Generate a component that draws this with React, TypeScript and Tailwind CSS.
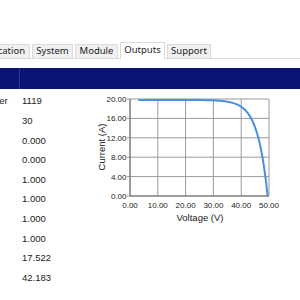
import React from 'react';

const rows = [
  { label: 'Module Number', value: '1119' },
  { label: '', value: '30' },
  { label: '', value: '0.000' },
  { label: '', value: '0.000' },
  { label: '', value: '1.000' },
  { label: '', value: '1.000' },
  { label: '', value: '1.000' },
  { label: '', value: '1.000' },
  { label: '', value: '17.522' },
  { label: '', value: '42.183' },
];

const tabs = [
  { name: 'Application', w: 'w-[60px]' },
  { name: 'System', w: 'w-[41px]' },
  { name: 'Module', w: 'w-[43px]' },
  { name: 'Outputs', w: 'w-[45px]', active: true },
  { name: 'Support', w: 'w-[44px]' },
];

// plot box inside the svg
const L = 40;
const R = 179;
const T = 10;
const B = 107;

function IVChart() {
  const sx = (v: number) => L + (v / 50) * (R - L);
  const sy = (i: number) => B - (i / 20) * (B - T);
  const isc = 19.8;
  const voc = 49.5;
  const a = 3.586;
  const pts: string[] = [];
  for (let v = 3; v <= voc; v += 0.25) {
    const i = Math.max(0, isc - isc * Math.exp((v - voc) / a));
    pts.push(`${sx(v).toFixed(2)},${sy(i).toFixed(2)}`);
  }
  pts.push(`${sx(voc).toFixed(2)},${sy(0).toFixed(2)}`);
  const yt = [0, 4, 8, 12, 16, 20];
  const xt = [0, 10, 20, 30, 40, 50];

  return (
    <svg width="200" height="140" className="block shrink-0" style={{ fontFamily: '"Liberation Sans", Arial, sans-serif' }}>
      {xt.map((v) => (
        <line key={'gx' + v} x1={sx(v)} x2={sx(v)} y1={T} y2={B} stroke="#9a9a9a" strokeWidth="1" />
      ))}
      {yt.map((i) => (
        <line key={'gy' + i} x1={L - 3} x2={R} y1={sy(i)} y2={sy(i)} stroke="#9a9a9a" strokeWidth="1" />
      ))}
      <line x1={L} x2={L} y1={T} y2={B} stroke="#6e6e6e" />
      <line x1={L} x2={R} y1={B} y2={B} stroke="#6e6e6e" />
      {yt.map((i) => (
        <text key={'ly' + i} x={L - 3.5} y={sy(i) + 3} fontSize="8" textAnchor="end" fill="#222">
          {i.toFixed(2)}
        </text>
      ))}
      {xt.map((v) => (
        <text key={'lx' + v} x={sx(v)} y={B + 12} fontSize="8" textAnchor="middle" fill="#222">
          {v.toFixed(2)}
        </text>
      ))}
      <text x={110} y={132} fontSize="9.5" textAnchor="middle" fill="#222">
        Voltage (V)
      </text>
      <text x={15} y={58} fontSize="9.5" textAnchor="middle" fill="#222" transform="rotate(-90 15 58)">
        Current (A)
      </text>
      <polyline points={pts.join(' ')} fill="none" stroke="#4a8fe0" strokeWidth="2" />
    </svg>
  );
}

export default function App() {
  return (
    <div className="w-[300px] h-[300px] bg-white overflow-hidden text-[#1a1a1a] font-['Liberation_Sans',Arial,sans-serif]">
      <div className="h-[43px]" />
      {/* tab strip */}
      <div className="flex items-end h-[16px] ml-[-30px] gap-[2px] border-b border-[#dadada] font-['Noto_Sans',sans-serif] text-[9.5px]">
        {tabs.map((t) =>
          t.active ? (
            <div
              key={t.name}
              className={`${t.w} h-[17px] mb-[-1px] pb-[2px] bg-white border border-b-0 border-[#dadada] flex items-center justify-center`}
            >
              {t.name}
            </div>
          ) : (
            <div
              key={t.name}
              className={`${t.w} h-[14px] bg-[#f0f0f0] border border-b-0 border-[#dadada] flex items-center justify-center`}
            >
              {t.name}
            </div>
          )
        )}
      </div>
      <div className="h-[9px]" />
      {/* header bar */}
      <div className="h-[21px] bg-[#0a1472] flex">
        <div className="w-[20px] border-r border-[#2b3690]" />
      </div>
      <div className="flex">
        <div className="w-[90px] shrink-0 pt-[2.5px] overflow-hidden text-[9.5px]">
          {rows.map((r, idx) => (
            <div key={idx} className="h-[19.67px] flex items-center ml-[-60px]">
              <div className="w-[82px] whitespace-nowrap">{r.label}</div>
              <div>{r.value}</div>
            </div>
          ))}
        </div>
        <IVChart />
      </div>
    </div>
  );
}
